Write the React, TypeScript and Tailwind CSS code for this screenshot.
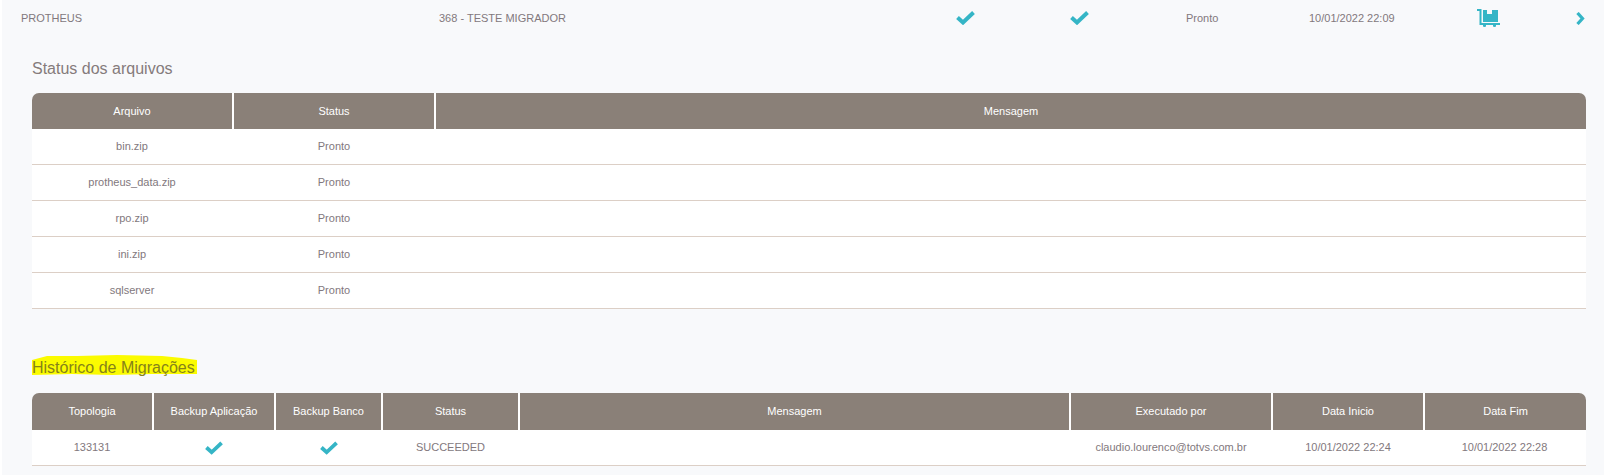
const F = "font-['Liberation_Sans',Arial,sans-serif]";
const Check = ({ className = "" }: { className?: string }) => (
  <svg viewBox="0 0 19 14" className={className} fill="none" stroke="#35b5c6" strokeWidth="4">
    <path d="M1.5 6.5l5.5 5L17.5 1.5" />
  </svg>
);
const Cart = () => (
  <svg viewBox="0 0 23 18" className="w-[23px] h-[18px] block" fill="#35b5c6">
    <path d="M0 0h4.5v14H23v2H2.5V2H0z" />
    <path d="M6 1h4v4h5V1h6v12H6z" />
    <path d="M6 16h3v1.2a1.5 .8 0 0 1-3 0zM16 16h3v1.2a1.5 .8 0 0 1-3 0z" />
  </svg>
);
const Chevron = () => (
  <svg viewBox="0 0 9 13" className="w-[9px] h-[13px] block" fill="none" stroke="#35b5c6" strokeWidth="3.2">
    <path d="M1.5 1l5 5.5-5 5.5" />
  </svg>
);

const fileCols = ["w-[202px]", "w-[202px]", "flex-1"];
const files = ["bin.zip", "protheus_data.zip", "rpo.zip", "ini.zip", "sqlserver"];
const histCols = [
  "w-[122px]",
  "w-[122px]",
  "w-[107px]",
  "w-[137px]",
  "w-[551px]",
  "w-[202px]",
  "w-[152px]",
  "flex-1",
];
const histHead = ["Topologia", "Backup Aplicação", "Backup Banco", "Status", "Mensagem", "Executado por", "Data Inicio", "Data Fim"];
const histRow: (string | null)[] = ["133131", null, null, "SUCCEEDED", "", "claudio.lourenco@totvs.com.br", "10/01/2022 22:24", "10/01/2022 22:28"];

function Head({ cols, labels, height }: { cols: string[]; labels: string[]; height: string }) {
  return (
    <div className={`flex ${height} rounded-t-[7px] overflow-hidden`}>
      {labels.map((l, i) => (
        <div
          key={l}
          className={`${cols[i]} bg-[#8a8078] text-white text-[11px] flex items-center justify-center ${i < labels.length - 1 ? "border-r-2 border-white" : ""}`}
        >
          {l}
        </div>
      ))}
    </div>
  );
}

export default function App() {
  return (
    <div className={`${F} w-[1604px] h-[475px] overflow-hidden bg-white text-[#82787d] text-[11px]`}>
      <div className="ml-[2px] h-full bg-[#f8f9fb]">
        <div className="flex h-[36px] items-center">
          <div className="w-[417px] pl-[19px]">PROTHEUS</div>
          <div className="w-[502px] pl-[20px]">368 - TESTE MIGRADOR</div>
          <div className="w-[119px] pl-[35px]"><Check className="w-[19px] h-[14px] block" /></div>
          <div className="w-[100px] pl-[30px]"><Check className="w-[19px] h-[14px] block" /></div>
          <div className="w-[133px] pl-[46px]">Pronto</div>
          <div className="w-[169px] pl-[36px]">10/01/2022 22:09</div>
          <div className="w-[94px] pl-[35px]"><Cart /></div>
          <div className="pl-[40px]"><Chevron /></div>
        </div>

        <div className="pl-[30px] w-[1584px]">
          <h2 className="text-[16px] h-[57px] leading-[20px] pt-[23px] text-[#857b7c]">Status dos arquivos</h2>
          <Head cols={fileCols} labels={["Arquivo", "Status", "Mensagem"]} height="h-[36px]" />
          <div className="bg-white">
            {files.map((f) => (
              <div key={f} className="flex h-[36px] items-center border-b border-[#dccfc6]">
                <div className={`${fileCols[0]} pr-[2px] text-center`}>{f}</div>
                <div className={`${fileCols[1]} pr-[2px] text-center`}>Pronto</div>
                <div className={fileCols[2]} />
              </div>
            ))}
          </div>

          <div className="pt-[49px] h-[84px]">
            <span className="relative inline-block text-[16px] leading-[20px] text-[#85821a]">
              <svg viewBox="0 0 165 21" className="absolute left-0 top-[-3px] w-[165px] h-[21px]" fill="#fbfb00">
                <polygon points="0,5 15,1 45,1 85,0 130,1 150,3 165,5 165,19 120,19 80,20 40,19 0,20" />
              </svg>
              <span className="relative">Histórico de Migrações</span>
            </span>
          </div>
          <Head cols={histCols} labels={histHead} height="h-[37px]" />
          <div className="bg-white flex h-[36px] items-center border-b border-[#dccfc6]">
            {histRow.map((c, i) => (
              <div key={i} className={`${histCols[i]} pr-[2px] text-center flex justify-center`}>
                {c === null ? <Check className="w-[18px] h-[14px] block" /> : c}
              </div>
            ))}
          </div>
        </div>
      </div>
    </div>
  );
}
